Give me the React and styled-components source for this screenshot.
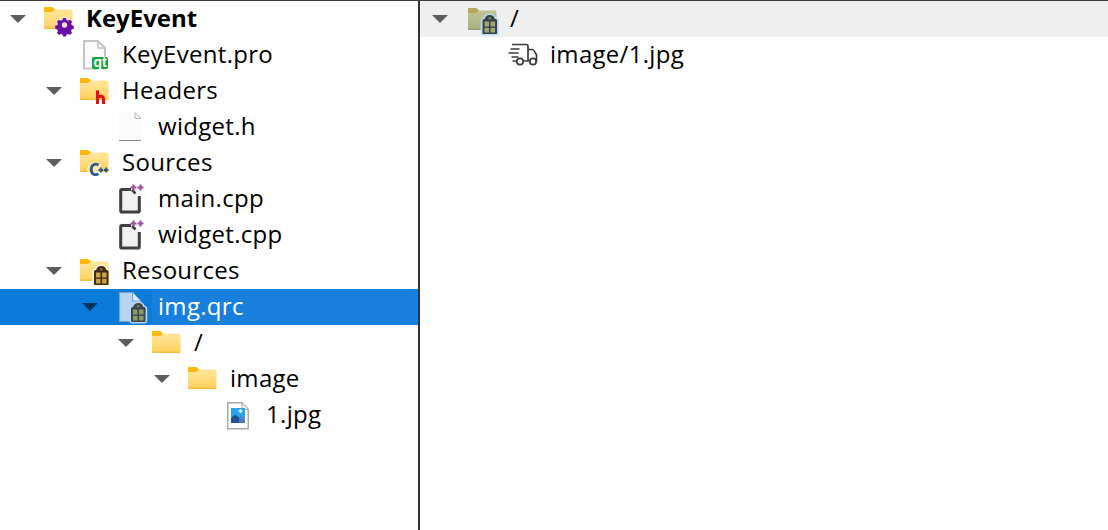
import React from "react";
import styled, { createGlobalStyle } from "styled-components";

const Global = createGlobalStyle`
  html, body { margin: 0; padding: 0; background: #fff; }
  body { width: 1108px; height: 530px; overflow: hidden; }
`;

const Page = styled.div`
  width: 1108px;
  height: 530px;
  display: flex;
  box-sizing: border-box;
  border-top: 1px solid #3a3a3a;
  font-family: "Open Sans", "Noto Sans", "Liberation Sans", sans-serif;
  font-size: 24px;
  color: #000;
  overflow: hidden;
`;

const TreePane = styled.div`
  width: 418px;
  flex: none;
  display: flex;
  flex-direction: column;
  border-right: 2px solid #333;
`;

const ContentPane = styled.div`
  flex: 1;
  display: flex;
  flex-direction: column;
`;

const Row = styled.div`
  height: 36px;
  flex: none;
  display: flex;
  align-items: center;
  padding-left: ${(p) => p.$base + p.$level * 36}px;
  background: ${(p) => (p.$selected ? "#0c7ad8" : p.$current ? "#efefef" : "transparent")};
  color: ${(p) => (p.$selected ? "#fff" : "#000")};
`;

const ArrowSlot = styled.span`
  width: ${(p) => p.$width}px;
  flex: none;
  display: flex;
  align-items: center;
`;

const Arrow = styled.span`
  width: 0;
  height: 0;
  border-left: 8px solid transparent;
  border-right: 8px solid transparent;
  border-top: 8px solid ${(p) => (p.$selected ? "#00325e" : "#5c5c5c")};
`;

const IconSlot = styled.span`
  width: 34px;
  height: 36px;
  flex: none;
  display: flex;
  align-items: center;
  svg { display: block; }
`;

const Label = styled.span`
  font-weight: ${(p) => (p.$bold ? 700 : 400)};
  padding: 0 8px;
  height: 36px;
  line-height: 33px;
  white-space: nowrap;
  letter-spacing: ${(p) => (p.$bold ? "0" : "0.3px")};
`;

const SelectedFill = styled.span`
  flex: 1;
  height: 36px;
  margin-left: 2px;
  display: flex;
  background: #1880dc;
  ${Label} { padding-left: 6px; }
`;

const FolderBase = ({ muted }) => (
  <>
    <defs>
      <linearGradient id={muted ? "fm" : "fy"} x1="0" y1="0" x2="0" y2="1">
        <stop offset="0" stopColor={muted ? "#c3c795" : "#ffe9a6"} />
        <stop offset="1" stopColor={muted ? "#a9b07f" : "#ffd05c"} />
      </linearGradient>
    </defs>
    <path d="M0 1.500C0 .5.6 0 1.500 0H8l3 2.500h16c.8 0 1.500.7 1.500 1.500v16.500c0 .8-.7 1.500-1.500 1.500H1.500C.6 22 0 21.300 0 20.500z" fill={`url(#${muted ? "fm" : "fy"})`} />
    <path d="M0 1.500C0 .5.6 0 1.500 0H8l3 2.500L8 5H0z" fill={muted ? "#b4a860" : "#ffb900"} />
    <path d="M0 20.500h28.500V21c0 .6-.5 1-1 1H1c-.5 0-1-.4-1-1z" fill={muted ? "#9aa070" : "#f7bd3d"} />
  </>
);

const Bag = ({ x, y, body, cell, halo }) => (
  <g transform={`translate(${x} ${y}) scale(1.12 1)`}>
    <path d="M-1.500 5.500C-1.500 4 -.5 3 .8 2.700 1.500 .5 3.500-1.500 6.500-1.500s5 2 5.700 4.200C13.500 3 14.500 4 14.500 5.500V18c0 1.500-1 2.500-2.500 2.500H1C-.5 20.500-1.500 19.500-1.500 18z" fill={halo} />
    <path d="M0 5.500C0 4.500.7 4 2 4 2.500 1.500 4 0 6.500 0S10.500 1.500 11 4c1.300 0 2 .5 2 1.500V18c0 .6-.4 1-1 1H1c-.6 0-1-.4-1-1z" fill={body} />
    <rect x="1.800" y="6.500" width="4" height="5" fill={cell} />
    <rect x="7.200" y="6.500" width="4" height="5" fill={cell} />
    <rect x="1.800" y="12.800" width="4" height="4.700" fill={cell} />
    <rect x="7.200" y="12.800" width="4" height="4.700" fill={cell} />
    <rect x="5.200" y="2" width="2.600" height="2.600" rx="1" fill={cell} opacity=".6" />
  </g>
);

const Svg = ({ w = 36, h = 30, children }) => (
  <svg width={w} height={h} viewBox={`0 0 ${w} ${h}`} style={{ overflow: "visible" }}>{children}</svg>
);

const FolderIcon = () => (
  <Svg><g transform="translate(0 3)"><FolderBase /></g></Svg>
);

const ProjectFolder = () => (
  <Svg>
    <g transform="translate(0 3)"><FolderBase /></g>
    <g transform="translate(20.500 21)">
      <circle r="8.500" fill="#fff" opacity=".5" />
      <path
        d="M-1.500-7h3l.5 2 1.700.7 1.800-1 2.100 2.100-1 1.800.7 1.700 2 .5v3l-2 .5-.7 1.700 1 1.800-2.100 2.100-1.800-1-1.700.7-.5 2h-3l-.5-2-1.700-.7-1.800 1-2.100-2.100 1-1.800-.7-1.700-2-.5v-3l2-.5.7-1.700-1-1.800 2.100-2.100 1.800 1 1.700-.7z"
        fill="#6a0dad"
      />
      <circle r="2.700" fill="#f4e4c0" />
    </g>
  </Svg>
);

const HeaderFolder = () => (
  <Svg>
    <g transform="translate(0 2)"><FolderBase /></g>
    <path d="M17.500 14.500v13.500M17.500 21.500c1-1.800 6-2.200 6 1.200v5.300" fill="none" stroke="#e2101b" strokeWidth="3" />
  </Svg>
);

const SourceFolder = () => (
  <Svg>
    <g transform="translate(0 2)"><FolderBase /></g>
    <circle cx="14.500" cy="21.500" r="7.500" fill="#fff" opacity=".45" />
    <path d="M18.500 17c-3.200-2-7.300-.4-7.300 4.400s4.100 6.400 7.300 4.400" fill="none" stroke="#2a5d86" strokeWidth="2.800" />
    <path d="M18.500 22h4.600M20.800 19.600v4.800M23.800 22h4.600M26.100 19.600v4.800" fill="none" stroke="#2a5d86" strokeWidth="2" />
  </Svg>
);

const ResourceFolder = () => (
  <Svg>
    <g transform="translate(0 3)"><FolderBase /></g>
    <Bag x="14" y="10" body="#3f2a1c" cell="#c9a33c" halo="#fff6dc" />
  </Svg>
);

const MutedResourceFolder = () => (
  <Svg>
    <g transform="translate(0 4)"><FolderBase muted /></g>
    <Bag x="14.500" y="11" body="#37424f" cell="#a0a86e" halo="#bcdcf0" />
  </Svg>
);

const ProFile = () => (
  <Svg>
    <path d="M4 1h14l7 7v20.500H4z" fill="#fbfbfb" stroke="#c4c4c4" strokeWidth="2" />
    <path d="M18 1.500V8h6.500" fill="none" stroke="#c4c4c4" strokeWidth="1.500" />
    <rect x="12" y="17" width="16" height="12" rx="2" fill="#12a53a" />
    <text x="20" y="26.800" fontSize="14" fontWeight="700" textAnchor="middle" fill="#fff" fontFamily="Liberation Sans, sans-serif">qt</text>
  </Svg>
);

const HeaderFile = () => (
  <Svg>
    <path d="M3 0h16l6 6.500V29H3z" fill="#fcfcfc" />
    <path d="M19 .5V6.500h6M19 .5l6 6" fill="none" stroke="#b5b5b5" strokeWidth="1" />
    <path d="M3 28.500h22" stroke="#8c8c8c" strokeWidth="1" />
  </Svg>
);

const CppFile = () => (
  <Svg>
    <rect x="3" y="3" width="22" height="27" fill="#fafafa" />
    <path d="M5 5h11l7 6v17H5z" fill="#f0f0f0" />
    <path d="M15 5.500H6c-.7 0-1.300.5-1.300 1.200v20c0 .8.600 1.300 1.300 1.300h16c.7 0 1.300-.5 1.300-1.300V12" fill="none" stroke="#3f3f3f" strokeWidth="3" />
    <path d="M16 6l3.500 3.500" stroke="#3f3f3f" strokeWidth="2.500" />
    <path d="M14.500 3.500h6M17.500.5v6M21.500 3.500h6M24.500.5v6" stroke="#9b4f9f" strokeWidth="2.200" fill="none" />
  </Svg>
);

const QrcFile = () => (
  <Svg>
    <path d="M3.500 .5h13l8 8.500V29.500H3.500z" fill="#b7d5f2" stroke="#6ea6d9" strokeWidth="1.200" />
    <path d="M16.500 .5V9h8" fill="#e1edf8" stroke="#6ea6d9" strokeWidth="1.200" />
    <Bag x="15" y="11" body="#3a4650" cell="#8f9a62" halo="#b7d5f2" />
  </Svg>
);

const ImageFile = () => (
  <Svg>
    <path d="M3.750 2.750h14l6.500 6.500V28.750H3.750z" fill="#fff" stroke="#a8a8a8" strokeWidth="1.500" />
    <path d="M18 3v6.500h6" fill="#eee" stroke="#a8a8a8" strokeWidth="1" />
    <rect x="7" y="8" width="14" height="15" fill="#29a5e8" />
    <path d="M7 18l4-3.500 4 3 6 3v2.500H7z" fill="#1f4f8f" />
    <path d="M15 17.500l2-1.500 4 3v4h-6z" fill="#5a7fd0" opacity=".8" />
    <path d="M14.500 11h4M16.500 9v4" stroke="#dff3ff" strokeWidth="1.500" />
  </Svg>
);

const TruckIcon = () => (
  <Svg>
    <path d="M4 4.500h14.500c.8 0 1.500.7 1.500 1.500v15h-5M8 21H4.500M20 9.500h4.500c1 0 3.500 4.500 4 5.500v6h-1M20 21h1" fill="none" stroke="#3c3c3c" strokeWidth="1.700" />
    <path d="M2.500 9h9M.5 13h10M3.500 17h7" fill="none" stroke="#3c3c3c" strokeWidth="1.700" />
    <circle cx="12" cy="21.500" r="3.200" fill="none" stroke="#3c3c3c" strokeWidth="1.700" />
    <circle cx="25" cy="21.500" r="3.200" fill="none" stroke="#3c3c3c" strokeWidth="1.700" />
  </Svg>
);

const tree = [
  { level: 0, open: true, icon: ProjectFolder, label: "KeyEvent", bold: true },
  { level: 1, icon: ProFile, label: "KeyEvent.pro" },
  { level: 1, open: true, icon: HeaderFolder, label: "Headers" },
  { level: 2, icon: HeaderFile, label: "widget.h" },
  { level: 1, open: true, icon: SourceFolder, label: "Sources" },
  { level: 2, icon: CppFile, label: "main.cpp" },
  { level: 2, icon: CppFile, label: "widget.cpp" },
  { level: 1, open: true, icon: ResourceFolder, label: "Resources" },
  { level: 2, open: true, icon: QrcFile, label: "img.qrc", selected: true },
  { level: 3, open: true, icon: FolderIcon, label: "/" },
  { level: 4, open: true, icon: FolderIcon, label: "image" },
  { level: 5, icon: ImageFile, label: "1.jpg" },
];

const TreeRow = ({ item, current, base = 10, arrowWidth = 34 }) => {
  const Icon = item.icon;
  return (
    <Row $base={base} $level={item.level} $selected={item.selected} $current={current}>
      <ArrowSlot $width={arrowWidth}>{item.open && <Arrow $selected={item.selected} />}</ArrowSlot>
      <IconSlot><Icon /></IconSlot>
      {item.selected ? (
        <SelectedFill><Label>{item.label}</Label></SelectedFill>
      ) : (
        <Label $bold={item.bold}>{item.label}</Label>
      )}
    </Row>
  );
};

export default function App() {
  return (
    <>
      <Global />
      <Page>
        <TreePane>
          {tree.map((item) => (
            <TreeRow key={item.level + item.label} item={item} />
          ))}
        </TreePane>
        <ContentPane>
          <TreeRow current base={12} arrowWidth={36} item={{ level: 0, open: true, icon: MutedResourceFolder, label: "/" }} />
          <TreeRow base={16} arrowWidth={36} item={{ level: 1, icon: TruckIcon, label: "image/1.jpg" }} />
        </ContentPane>
      </Page>
    </>
  );
}
